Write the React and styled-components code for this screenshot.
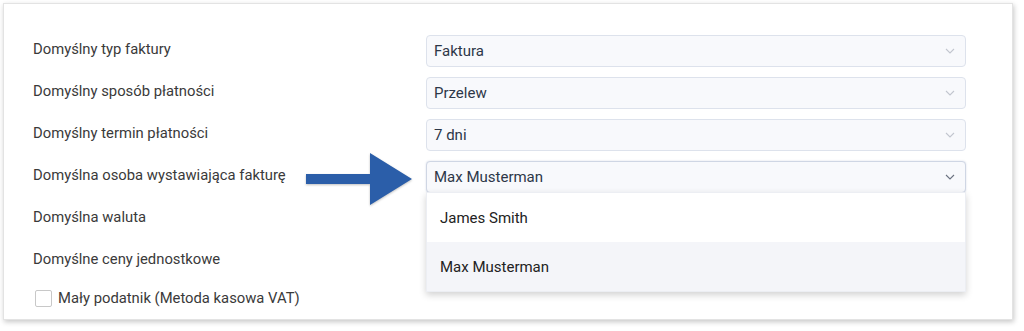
import React from "react";
import styled, { createGlobalStyle } from "styled-components";

const Global = createGlobalStyle`
  html, body { margin: 0; padding: 0; background: #ffffff; }
  body { font-family: Roboto, "Noto Sans", Arial, sans-serif; }
  * { box-sizing: border-box; }
`;

const Page = styled.div`
  width: 1024px;
  height: 331px;
  padding: 3px 11px 11px 3px;
  background: #ffffff;
`;

const Card = styled.div`
  position: relative;
  width: 1010px;
  height: 317px;
  background: #ffffff;
  border: 1px solid #e3e3e3;
  box-shadow: 1px 2px 5px rgba(0, 0, 0, 0.22);
  padding: 31px 46px 0 29px;
  display: flex;
  flex-direction: column;
  gap: 10px;
`;

const Row = styled.div`
  display: grid;
  grid-template-columns: 393px 540px;
  align-items: start;
  height: 32px;
  position: relative;
`;

const Label = styled.div`
  padding-top: 4px;
  font-size: 14.8px;
  line-height: 20px;
  color: #3a3a3a;
`;

const SelectWrap = styled.div`
  position: relative;
`;

const SelectBox = styled.div`
  height: 32px;
  display: flex;
  align-items: center;
  justify-content: space-between;
  padding: 0 10px 0 7px;
  background: #f8f9fc;
  border: 1px solid ${(p) => (p.$open ? "#cfd6e4" : "#dde2ec")};
  border-radius: 4px;
  font-size: 15px;
  color: #2d3748;
  box-shadow: ${(p) => (p.$open ? "0 0 2px rgba(90,110,160,0.25)" : "none")};
`;

const Chevron = styled.svg`
  width: 10px;
  height: 6px;
  flex: none;
  margin-left: auto;
`;

const Menu = styled.div`
  position: absolute;
  left: 0;
  right: 0;
  top: 31px;
  background: #ffffff;
  border: 1px solid #eceef3;
  box-shadow: 0 3px 7px rgba(0, 0, 0, 0.18);
  z-index: 5;
`;

const Option = styled.div`
  height: 49px;
  display: flex;
  align-items: center;
  padding-left: 13px;
  font-size: 15px;
  color: #222222;
  background: ${(p) => (p.$active ? "#f4f5f9" : "#ffffff")};
`;

const CheckRow = styled.label`
  display: flex;
  align-items: center;
  gap: 6px;
  height: 22px;
  padding-left: 2px;
  font-size: 14.8px;
  color: #3a3a3a;
`;

const Box = styled.span`
  width: 17px;
  height: 17px;
  border: 1px solid #c8c8c8;
  border-radius: 2px;
  background: #ffffff;
`;

const Arrow = styled.svg`
  position: absolute;
  left: 302px;
  top: 149px;
  width: 106px;
  height: 52px;
  filter: drop-shadow(0 1px 1px rgba(0, 0, 0, 0.25));
  z-index: 6;
`;

const ChevronIcon = ({ dark }) => (
  <Chevron viewBox="0 0 10 6">
    <path
      d="M1 1 L5 5 L9 1"
      fill="none"
      stroke={dark ? "#6b7280" : "#c2c6cf"}
      strokeWidth="1.1"
    />
  </Chevron>
);

const rows = [
  { label: "Domyślny typ faktury", value: "Faktura" },
  { label: "Domyślny sposób płatności", value: "Przelew" },
  { label: "Domyślny termin płatności", value: "7 dni" },
  { label: "Domyślna osoba wystawiająca fakturę", value: "Max Musterman", open: true },
  { label: "Domyślna waluta", value: "" },
  { label: "Domyślne ceny jednostkowe", value: "" },
];

export default function App() {
  return (
    <>
      <Global />
      <Page>
        <Card>
          {rows.map((r) => (
            <Row key={r.label}>
              <Label>{r.label}</Label>
              <SelectWrap>
                <SelectBox $open={r.open}>
                  {r.value && <span>{r.value}</span>}
                  <ChevronIcon dark={r.open} />
                </SelectBox>
                {r.open && (
                  <Menu>
                    <Option>James Smith</Option>
                    <Option $active>Max Musterman</Option>
                  </Menu>
                )}
              </SelectWrap>
            </Row>
          ))}
          <CheckRow>
            <Box />
            Mały podatnik (Metoda kasowa VAT)
          </CheckRow>
          <Arrow viewBox="0 0 106 52">
            <path d="M0 21 H64 V0 L106 26 L64 52 V31 H0 Z" fill="#2b5ea9" />
          </Arrow>
        </Card>
      </Page>
    </>
  );
}
